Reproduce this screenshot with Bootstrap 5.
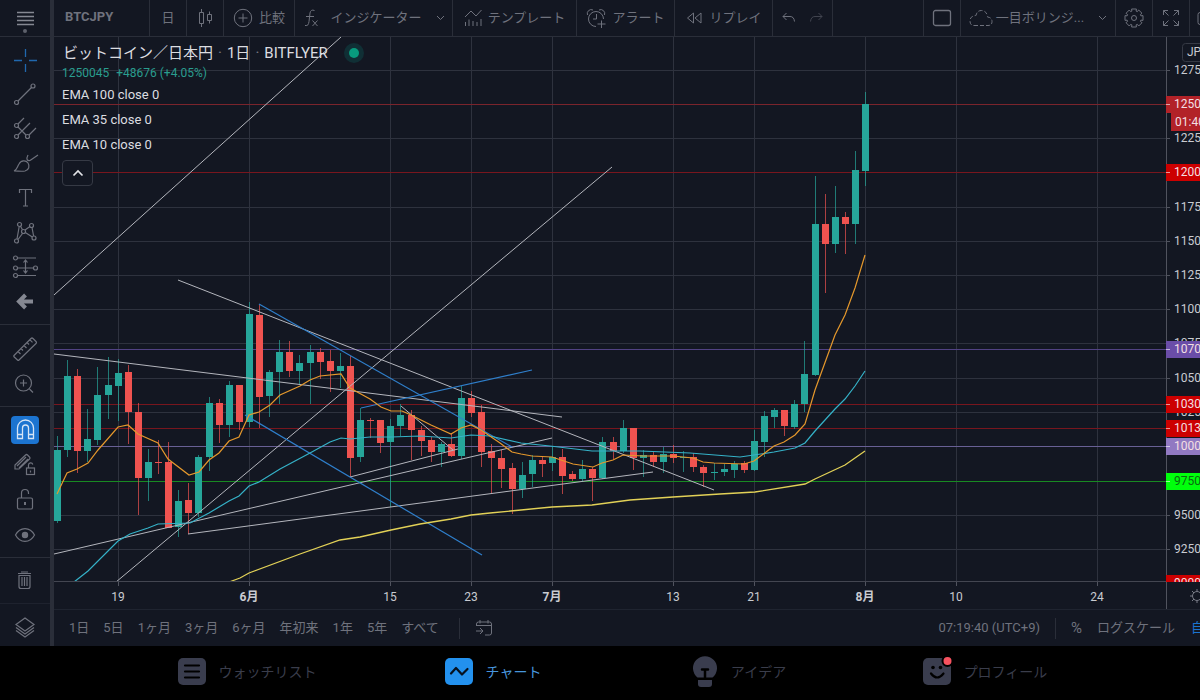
<!DOCTYPE html>
<html lang="ja" data-bs-theme="dark">
<head>
<meta charset="utf-8">
<meta name="viewport" content="width=device-width, initial-scale=1">
<title>BTCJPY チャート</title>
<link href="https://cdn.jsdelivr.net/npm/bootstrap@5.3.0/dist/css/bootstrap.min.css" rel="stylesheet">
<style>
:root{--panel:#131722;--rule:#2a2e39;--dim:#6f727d;--ui:Roboto,"Noto Sans CJK JP",sans-serif}
body{background:#000;font-family:var(--ui);font-size:13px;line-height:20px;color:var(--dim)}
button{font-family:inherit}
.workspace{background:var(--panel);min-width:0}
svg{display:block;flex:none}
.ico{fill:none;stroke:currentColor;stroke-width:1}
.tool{border:0;background:none;color:inherit;padding:0;font-size:13px;line-height:20px;white-space:nowrap}
/* drawing tools */
.side{width:54px;border-right:4px solid var(--rule);flex:none}
.side .head{height:37px;border-bottom:1px solid var(--rule)}
.side hr{margin:5px 0 6px;border-top:1px solid var(--rule);opacity:1}
.side .tool{height:28px;width:28px}
.side .ico{stroke-width:1.2}
.set-8{height:275px;margin-top:7px}.set-4{height:139px}.set-2{height:70px}.set-1{height:34px}
.side .tool.on{background:#1c74d0;color:#d5e4f5;border-radius:4px}
/* top bar */
.topbar{height:37px;border-bottom:1px solid var(--rule);overflow:hidden}
.topbar .tool{height:36px;border-right:1px solid var(--rule);padding:0 8px;display:flex;align-items:center;justify-content:center;gap:6px;flex:none}
.topbar .sym{width:97px;font-weight:700;justify-content:start;padding-left:11px;padding-bottom:2px}
.topbar .sym{width:96px}
.topbar .sq{width:37px;padding:0}
.w-a{width:71px}.w-b{width:158px}.w-c{width:124px}.w-d{width:98px}.w-e{width:60px}.w-f{width:155px}
.topbar .edge{width:10px;padding:0;border:0;justify-content:start;overflow:hidden}
/* chart */
.stage{min-height:0}
.stage>svg{width:100%;height:100%}
.stage text{font-family:var(--ui);font-size:12px;fill:#c9cbd1}
.legend{position:absolute;left:8px;top:4px;color:#dcdde0}
.legend .ttl{font-size:15px;line-height:24px;gap:5px;padding-left:1px}
.legend .val{font-size:12px;line-height:16px;color:#2a9d8f;gap:7px;margin-bottom:1px}
.legend .ema{font-size:13px;line-height:25px}
.legend .tool{width:31px;height:26px;margin-top:3px;border:1px solid #363a45;border-radius:4px;background:var(--panel);color:#e3e4e8}
.live{width:20px;height:20px;border-radius:50%;background:#102f35;margin-left:11px}
.live::after{content:"";width:10px;height:10px;border-radius:50%;background:#089b7e}
/* range bar */
.ranges{height:37px;border-top:1px solid #1f2430;overflow:hidden;padding-left:15px}
.spans{gap:14px;padding-right:5px}
.vr-line{width:1px;height:21px;background:var(--rule);margin:0 15px}
.ranges .pct{font-size:15px}
.ranges .log{margin:0 16px 0 15px}
.auto{width:9px;overflow:hidden;color:#1c74d0}
/* app tabs */
.tabs{height:54px;background:#000;padding:0 92px 0 124px}
.tabs a{flex:1 1 0;color:#3a3d4b;text-decoration:none;font-size:14px;gap:13px;padding-bottom:2px;white-space:nowrap}
.tabs a.active{color:#4795dc}
</style>
</head>
<body class="d-flex flex-column min-vh-100">
<div class="workspace d-flex flex-grow-1">

<nav class="side" aria-label="描画ツール">
  <div class="head d-flex justify-content-center"><button class="tool h-100" aria-label="メニュー"><svg class="ico" width="28" height="34"><path d="M6 11.500h17M6 15.500h17M6 19.500h17M6 23.500h17" stroke-width="1.500" stroke="#858892"/><circle cx="14" cy="30" r="2" fill="#5d606b" stroke="none"/></svg></button></div>
  <div class="set-8 d-flex flex-column align-items-center justify-content-around">
    <button class="tool" aria-label="十字"><svg class="ico" width="28" height="28"><path d="M3 13.500h8M18 13.500h8M14.500 2v8M14.500 17v8" stroke="#2068ae" stroke-width="1.300"/></svg></button>
    <button class="tool" aria-label="線"><svg class="ico" width="28" height="28" viewBox="0 2 28 28"><circle cx="5.500" cy="22.500" r="2"/><circle cx="22" cy="6" r="2"/><path d="M7 21 20.500 7.500"/></svg></button>
    <button class="tool" aria-label="ピッチフォーク"><svg class="ico" width="28" height="28" viewBox="0 2 28 28"><circle cx="5.500" cy="11.500" r="2"/><circle cx="5.500" cy="22.500" r="2"/><circle cx="16.500" cy="22.500" r="2"/><path d="M7 10 13 4M7 21 19 9M18 21l7-7M7 13l8 8"/></svg></button>
    <button class="tool" aria-label="ブラシ"><svg class="ico" width="28" height="28" viewBox="0 1 28 28"><path d="M3 22c3-1 3-4 5-7 2-4 7-4 9-1s1 7-3 8c-3 .6-7 0-11 0zM17 6c-2 4-1 6 2 5.500M19 11.500l8-5.500"/></svg></button>
    <button class="tool" aria-label="テキスト"><svg class="ico" width="28" height="28"><path d="M8.500 8V4.500h12V8M14.500 4.500V21M12 21h5"/></svg></button>
    <button class="tool" aria-label="パターン"><svg class="ico" width="28" height="28" viewBox="0 1 28 28"><circle cx="5.500" cy="23" r="2"/><circle cx="8.500" cy="6.500" r="2"/><circle cx="12.500" cy="13.500" r="2"/><circle cx="20.500" cy="7.500" r="2"/><circle cx="23" cy="20" r="2"/><path d="M6 21 8.200 8.500M9.500 8.200l2 3.600M14 12l5-3.500M21 9.500l1.600 8.500M7 21.500l4.500-6M14.300 14.500l7 4.500"/></svg></button>
    <button class="tool" aria-label="予測"><svg class="ico" width="28" height="28" viewBox="0 -1 28 28"><circle cx="4.500" cy="4" r="2"/><circle cx="4.500" cy="14" r="2"/><circle cx="24.500" cy="14" r="2"/><circle cx="4.500" cy="21.500" r="2"/><path d="M6.500 4H25M6.500 14h16M6.500 21.500H25M14.500 6v12.500M12.500 8.500l2-2.500 2 2.500M12.500 16.500l2 2.500 2-2.500"/></svg></button>
    <button class="tool" aria-label="矢印"><svg class="ico" width="28" height="28"><path d="M14.500 7 8 13.500 14.500 20M8.500 13.500H22" stroke-width="4" stroke="#858892"/></svg></button>
  </div>
  <hr>
  <div class="set-2 d-flex flex-column align-items-center justify-content-around">
    <button class="tool" aria-label="計測"><svg class="ico" width="28" height="28"><path d="M3 20.500 20 3.500q1-1 2 0l3 3q1 1 0 2L8 25q-.7.700-1.500 0L3 21.800q-.6-.6 0-1.300zM7 16.500l2.500 2.500M10 13.500l2 2M13 10.500l2.500 2.500M16 7.500l2 2M19 4.800l2.500 2.500"/></svg></button>
    <button class="tool" aria-label="拡大"><svg class="ico" width="28" height="28"><circle cx="12.500" cy="13" r="8"/><path d="M12.500 9.500v7M9 13h7M18.500 19l3.500 3.500"/></svg></button>
  </div>
  <hr>
  <div class="set-4 d-flex flex-column align-items-center justify-content-around">
    <button class="tool on" aria-label="マグネット"><svg class="ico" width="28" height="28"><path d="M6.500 22.500V12a8 8 0 0 1 16 0v10.500h-5V12a3 3 0 0 0-6 0v10.500zM6.500 18.500h5M17.500 18.500h5" stroke-width="1.300"/></svg></button>
    <button class="tool" aria-label="描画モード"><svg class="ico" width="28" height="28"><path d="M4 18v-4L14.500 4q1-1 2 0l2 2q1 1 0 2L8 18zM6 15l9-9M8 17l9-9"/><rect x="15.500" y="17" width="8" height="6.500"/><path d="M17.500 17v-3a2.200 2.200 0 0 1 4.300-.5M19.500 19.500v2"/></svg></button>
    <button class="tool" aria-label="ロック"><svg class="ico" width="28" height="28"><rect x="6.500" y="12" width="15" height="11" rx="1.500"/><path d="M10.500 12V7a3.500 3.500 0 0 1 7 0v1"/><path d="M14 16v3" stroke-width="2"/></svg></button>
    <button class="tool" aria-label="表示"><svg class="ico" width="28" height="28"><path d="M4.500 14C9 5.500 19 5.500 23.500 14 19 22.500 9 22.500 4.500 14z"/><circle cx="14" cy="14" r="2.600" fill="currentColor"/></svg></button>
  </div>
  <hr>
  <div class="set-1 d-flex flex-column align-items-center justify-content-around">
    <button class="tool" aria-label="削除"><svg class="ico" width="28" height="28"><path d="M7 6.500h13M10 5h7M8 8.500v11q0 2 2 2h7q2 0 2-2v-11zM11 10v9M13.500 10v9M16 10v9" stroke-width="1.200"/></svg></button>
  </div>
  <hr class="opacity-50">
  <div class="set-1 d-flex flex-column align-items-center justify-content-around">
    <button class="tool" aria-label="オブジェクト"><svg class="ico" width="28" height="28"><path d="M14 5 23 11.500 14 18 5 11.500zM5 14.500l9 6.500 9-6.500M5 17.500l9 6.500 9-6.500"/></svg></button>
  </div>
</nav>

<main class="d-flex flex-column flex-grow-1" style="min-width:0">
  <header class="topbar d-flex">
    <button class="tool sym">BTCJPY</button>
    <button class="tool sq">日</button>
    <button class="tool sq" aria-label="ローソク足"><svg class="ico" width="18" height="22"><path d="M3.500 5.500h4v11h-4zM5.500 2v3.500M5.500 16.500V20M11.500 7.500h4v6h-4zM13.500 4.500v3M13.500 13.500v3"/></svg></button>
    <button class="tool w-a"><svg class="ico" width="20" height="20"><circle cx="10" cy="10" r="8.700"/><path d="M10 5.500v9M5.500 10h9"/></svg>比較</button>
    <button class="tool w-b"><svg class="ico" width="18" height="20"><path d="M2 17.500c3 .5 3.500-1 4-4L7 5c.4-2.500 2-3.500 4.500-2.500M3 8.500h8M9.500 12.500l5 5.500M14.500 12.500l-5 5.500"/></svg><span class="ms-1">インジケーター</span><svg class="ico ms-2" width="9" height="6"><path d="M1 1l3.500 3.500L8 1"/></svg></button>
    <button class="tool w-c"><svg class="ico" width="18" height="20"><path d="M1 9l6-6 5 5 5.500-6M1.500 14v4M5 11.500V18M9 13v5M13 14v4M17 11v7"/></svg>テンプレート</button>
    <button class="tool w-d"><svg class="ico" width="20" height="20"><path d="M10 18.500A7.500 7.500 0 1 1 17.500 11M1.500 7A4 4 0 0 1 7 2M13 2a4 4 0 0 1 5.500 5M10.500 6v5H7M15.500 12.500v8M11.500 16h8"/></svg>アラート</button>
    <button class="tool w-d"><svg class="ico" width="18" height="14"><path d="M8.500 2v10L2.500 7zM16 2v10l-6-5z"/></svg>リプレイ</button>
    <div class="tool w-e" style="gap:11px"><button class="tool border-0 p-0" aria-label="元に戻す"><svg class="ico" width="16" height="12"><path d="M5.500 1 2 4.500 5.500 8M2 4.500h7q4 0 4.500 5"/></svg></button><button class="tool border-0 p-0 opacity-50" aria-label="やり直す"><svg class="ico" width="16" height="12"><path d="M10.500 1 14 4.500 10.500 8M14 4.500H7q-4 0-4.500 5"/></svg></button></div>
    <div class="d-flex ms-auto border-start" style="--bs-border-color:#2a2e39">
      <button class="tool sq" aria-label="レイアウト"><svg class="ico" width="20" height="18"><rect x="1.500" y="1.500" width="17" height="15" rx="2" stroke-width="1.300"/></svg></button>
      <button class="tool w-f"><svg class="ico" width="24" height="18"><path d="M5 16.500h14q4 0 4-4t-4.500-4.500Q18 2 12.500 1.500 8 1.500 7 6.500 1 7 1 12q0 4.500 4 4.500z" stroke-dasharray="4 2"/></svg><span style="margin-left:-3px">一目ボリンジ...</span><svg class="ico ms-2" width="9" height="6"><path d="M1 1l3.500 3.500L8 1"/></svg></button>
      <button class="tool sq" aria-label="設定"><svg class="ico" width="20" height="20" viewBox="-10 -10 20 20"><circle r="2.500"/><path id="gear"/></svg></button>
      <button class="tool sq" aria-label="全画面"><svg class="ico" width="18" height="18"><path d="M1.500 6V1.500H6M1.500 1.500 6.500 6.500M12 1.500h4.500V6M16.500 1.500l-5 5M1.500 12v4.500H6M1.500 16.500l5-5M16.500 12v4.500H12M16.500 16.500l-5-5"/></svg></button>
      <button class="tool edge" aria-label="スナップショット"><svg class="ico" style="margin-left:7px" width="20" height="16"><rect x="1" y="2.500" width="17" height="12" rx="2"/></svg></button>
    </div>
  </header>

  <section class="stage position-relative flex-grow-1">
    <svg viewBox="54 37 1146 572" preserveAspectRatio="xMinYMin meet" role="img" aria-label="ビットコイン 日本円 日足チャート">
      <defs><clipPath id="plot"><rect x="54" y="37" width="1112" height="545"/></clipPath></defs>
      <g clip-path="url(#plot)"><g id="grid"></g><g id="levels"></g><g id="bars"></g><g id="trends"></g></g>
      <path d="M54 581.500H1200" stroke="#434651"/><path d="M1166.500 37V609" stroke="#50535e"/>
      <g id="dates"></g><g id="prices"></g>
      <rect x="1182.500" y="43.500" width="40" height="18" rx="3" fill="none" stroke="#363a45"/>
      <text x="1187" y="56">JP</text>
      <g fill="none" stroke="#787b86"><circle cx="1197" cy="596" r="4.500"/><path d="M1190 596h2.500M1192 591l2 2M1192 601l2-2M1197 589v2.500M1197 600.500v2.500"/></g>
    </svg>
    <div class="legend">
      <div class="ttl d-flex align-items-center"><span>ビットコイン／日本円</span><span class="opacity-50">·</span><span>1日</span><span class="opacity-50">·</span><span>BITFLYER</span><span class="live d-flex align-items-center justify-content-center"></span></div>
      <div class="val d-flex"><span>1250045</span><span>+48676 (+4.05%)</span></div>
      <div class="ema">EMA 100 close 0</div>
      <div class="ema">EMA 35 close 0</div>
      <div class="ema">EMA 10 close 0</div>
      <button class="tool d-flex align-items-center justify-content-center" aria-label="折りたたむ"><svg class="ico" width="12" height="8"><path d="M1.500 6.500 6 2l4.500 4.500" stroke-width="1.700"/></svg></button>
    </div>
  </section>

  <footer class="ranges d-flex align-items-center">
    <div class="spans d-flex">
      <button class="tool">1日</button><button class="tool">5日</button><button class="tool">1ヶ月</button><button class="tool">3ヶ月</button><button class="tool">6ヶ月</button><button class="tool">年初来</button><button class="tool">1年</button><button class="tool">5年</button><button class="tool">すべて</button>
    </div>
    <span class="vr-line"></span>
    <button class="tool" aria-label="日付へ移動"><svg class="ico" width="18" height="18"><path d="M1.500 7V5q0-2 2-2h11q2 0 2 2v9q0 2-2 2H10M1.500 6.500h15M5 1v3.500M13 1v3.500M1 12h7M5 9l3 3-3 3"/></svg></button>
    <div class="d-flex align-items-center ms-auto">
      <button class="tool">07:19:40 (UTC+9)</button><span class="vr-line"></span>
      <button class="tool pct">%</button><button class="tool log">ログスケール</button><button class="tool auto">自動</button>
    </div>
  </footer>
</main>
</div>

<nav class="tabs d-flex" aria-label="メイン">
  <a href="#" class="d-flex align-items-center justify-content-center"><svg width="28" height="28"><rect width="28" height="27" rx="5" fill="#3a3d4e"/><path d="M7 7.500h14M7 13.500h14M7 19.500h14" stroke="#000" stroke-width="2.200" stroke-linecap="round"/></svg>ウォッチリスト</a>
  <a href="#" class="active d-flex align-items-center justify-content-center"><svg width="28" height="28"><rect width="28" height="27" rx="5" fill="#2391ee"/><path d="M6 15.500 11 10l6 6.500 5.500-5.500" fill="none" stroke="#06111f" stroke-width="2.200" stroke-linecap="round" stroke-linejoin="round"/></svg>チャート</a>
  <a href="#" class="d-flex align-items-center justify-content-center"><svg width="26" height="32" viewBox="1 0 26 32"><path d="M6.500 21.500a12 12 0 1 1 15 0z" fill="#3a3d4e"/><path d="M11 13.500h6M14 13.500v8" stroke="#000" stroke-width="2.500" stroke-linecap="round"/><path d="M7 24h14v4q0 3-3 3h-8q-3 0-3-3z" fill="#3a3d4e"/></svg>アイデア</a>
  <a href="#" class="d-flex align-items-center justify-content-center"><svg width="28" height="28" overflow="visible"><rect width="28" height="27" rx="5" fill="#3a3d4e"/><circle cx="10" cy="9.500" r="1.800"/><circle cx="17.500" cy="9.500" r="1.800"/><path d="M8 15.500q6 8 12.500 0" fill="none" stroke="#000" stroke-width="2.200" stroke-linecap="round"/><circle cx="24.500" cy="3" r="5" fill="#f7525f" stroke="#000" stroke-width="2"/></svg>プロフィール</a>
</nav>

<script src="https://cdn.jsdelivr.net/npm/bootstrap@5.3.0/dist/js/bootstrap.bundle.min.js"></script>
<script>
const put = (id, s) => document.getElementById(id).innerHTML = s;
// daily candles: [high, body top, body bottom, low, rising]
const bars = [[436,450,521,523,1],[360,376,450,457,1],[369,376,451,473,0],[409,439,451,462,1],[367,395,440,445,1],[357,385,395,419,1],[359,373,386,421,1],[365,372,412,444,0],[403,412,478,515,0],[449,462,478,501,1],[440,462,463,474,0],[442,462,528,528,0],[490,501,527,537,1],[483,500,513,534,0],[455,457,513,517,1],[397,403,457,471,1],[399,403,425,443,0],[381,385,425,437,1],[385,385,422,430,0],[302,314,422,427,1],[304,315,397,428,0],[370,372,396,417,1],[340,352,372,404,1],[341,352,371,377,0],[355,363,371,384,1],[345,352,363,404,1],[348,352,362,379,0],[350,361,371,392,0],[353,366,371,388,1],[356,366,458,477,0],[408,420,457,462,1],[418,420,421,438,0],[420,420,443,453,0],[419,426,442,507,1],[404,415,426,436,1],[410,415,430,460,0],[426,430,441,456,0],[437,440,452,462,0],[442,444,452,467,1],[433,444,456,457,0],[386,398,456,459,1],[391,398,413,417,0],[405,412,452,467,0],[444,451,458,493,0],[450,458,469,488,0],[463,468,489,514,0],[462,475,489,498,1],[455,460,474,487,1],[457,460,464,477,0],[446,457,463,471,1],[449,457,476,494,0],[471,474,479,481,0],[460,469,479,481,1],[467,469,478,501,0],[437,442,478,479,1],[437,442,451,459,0],[420,428,451,453,1],[428,428,458,470,0],[450,455,458,477,1],[452,455,462,467,0],[447,454,462,473,1],[445,454,458,463,0],[451,457,458,472,1],[453,457,467,472,0],[465,467,473,487,0],[463,472,473,480,1],[464,469,472,476,1],[461,464,470,478,1],[461,463,470,473,0],[430,441,470,471,1],[411,416,442,457,1],[408,410,417,428,1],[410,410,426,436,0],[400,404,427,429,1],[341,374,404,412,1],[176,224,375,376,1],[194,224,244,293,0],[186,217,244,253,1],[212,217,224,254,0],[151,170,224,244,1],[92,104,171,186,1]];
const X = i => Math.round(57 + 10.1 * i);
put('bars', bars.map(([h,t,b,l,up],i) => {
  const x = X(i), c = up ? '#26a69a' : '#ef5350';
  return `<path d="M${x+.5} ${h}V${l}" stroke="${c}" stroke-opacity=".7"/><rect x="${x-3}" y="${t}" width="7" height="${b-t}" fill="${c}"/>`;
}).join(''));
const days = [[6,'19'],[19,'6月',1],[33,'15'],[41,'23'],[49,'7月',1],[61,'13'],[69,'21'],[80,'8月',1],[89,'10'],[103,'24']];
const ticks = [[70,'1275'],[138,'1225'],[207,'1175'],[241,'1150'],[275,'1125'],[309,'1100'],[343,'1075'],[378,'1050'],[412,'1025'],[515,'9500'],[549,'9250']];
put('grid', days.map(([i]) => `<path d="M${X(i)+.5} 37V582" stroke="#2e323e"/>`).join('') + ticks.map(([y]) => `<path d="M54 ${y+.5}H1166" stroke="#2e323e"/>`).join(''));
put('dates', days.map(([i,t,b]) => `<path d="M${X(i)+.5} 582v4" stroke="#50535e"/><text x="${X(i)}" y="601" text-anchor="middle"${b?' font-weight="700"':''}>${t}</text>`).join(''));
const tags = [[104,'1250','#b22228','#7a242c'],[172,'1200','#cc0000','#78161e'],[349,'1070','#6a4da8','#514283'],[404,'1030','#cc0000','#78161e'],[428,'1013','#cc0000','#78161e'],[446,'1000','#9179c2','#686095'],[481,'9750','#00ff0c','#188a22'],[583,'9000','#cc0000','none']];
put('levels', tags.map(([y,,,c]) => `<path d="M54 ${y+.5}H1166" stroke="${c}"/>`).join(''));
put('prices', '<clipPath id="scale"><rect x="1160" y="37" width="60" height="545"/></clipPath><g clip-path="url(#scale)">' +
  ticks.map(([y,t]) => `<path d="M1166 ${y+.5}h4" stroke="#50535e"/><text x="1174" y="${y+4}">${t}</text>`).join('') +
  tags.map(([y,t,f]) => `<rect x="1166" y="${y-8}" width="60" height="17" fill="${f}"/><path d="M1166 ${y+.5}h4" stroke="#fff" stroke-opacity=".6"/><text x="1174" y="${y+4}" style="fill:${t=='9750'?'#0b6b10':'#f3dfe2'}">${t}</text>`).join('') +
  '<rect x="1171" y="113" width="60" height="18" fill="#b22228"/><text x="1175" y="126" style="fill:#f3dfe2">01:40</text></g>');
const line = (p, c, w = 1) => `<polyline points="${p}" fill="none" stroke="${c}" stroke-width="${w}"/>`;
const W = '#b4b6bd', B = '#2f7fcb';
put('trends', [
  '54,295 341,37','116,582 612,167','178,280 714,490','54,354 562,417','54,554 552,438','188,534 653,472','350,477 458,449','401,406 453,450'].map(p => line(p, W)).join('') +
  ['259,304 512,447','245,415 482,555','361,408 532,370'].map(p => line(p, B, 1.2)).join('') +
  line('229,582 240,578 249,573 300,554 340,540 360,537 391,530 420,524 451,519 471,515 490,513 521,510 552,507 592,505 630,500 673,497 720,494 755,492 805,484 815,479 845,465 865,451', '#e2d157', 1.3) +
  line('74,582 88,571 118,541 130,534 148,528 158,524 190,523 209,513 229,501 239,496 249,486 259,482 280,469 310,453 330,442 341,438 350,439 370,437 391,437 420,436 451,438 471,435 490,436 521,443 550,446 592,451 640,451 690,453 740,457 754,455 774,452 795,448 805,443 815,431 835,409 845,399 855,386 865,371', '#35b2c8', 1.2) +
  line('57,494 67,473 77,469 88,463 98,450 118,427 128,425 138,434 158,443 168,459 189,475 199,472 209,460 219,453 229,441 239,437 249,415 259,412 270,405 280,395 300,386 310,380 320,376 341,374 350,388 370,399 381,407 391,411 402,411 411,415 431,425 451,434 461,428 471,425 481,430 500,443 512,452 521,454 532,456 552,457 573,464 593,467 602,463 613,460 623,455 643,456 673,456 693,458 703,462 714,463 744,464 754,461 774,446 784,442 795,435 805,424 815,390 835,335 845,315 855,288 865,255', '#e5982c', 1.2));
// eight-toothed gear outline
let g = '';
for (let k = 0; k < 8; k++) [[-.26,9.3],[.26,9.3],[.3,7.2],[.485,7.2]].forEach(([a,r]) => { const t = k*Math.PI/4 + a; g += (g?'L':'M') + (r*Math.cos(t)).toFixed(1) + ' ' + (r*Math.sin(t)).toFixed(1); });
document.getElementById('gear').setAttribute('d', g + 'Z');
</script>
</body>
</html>
